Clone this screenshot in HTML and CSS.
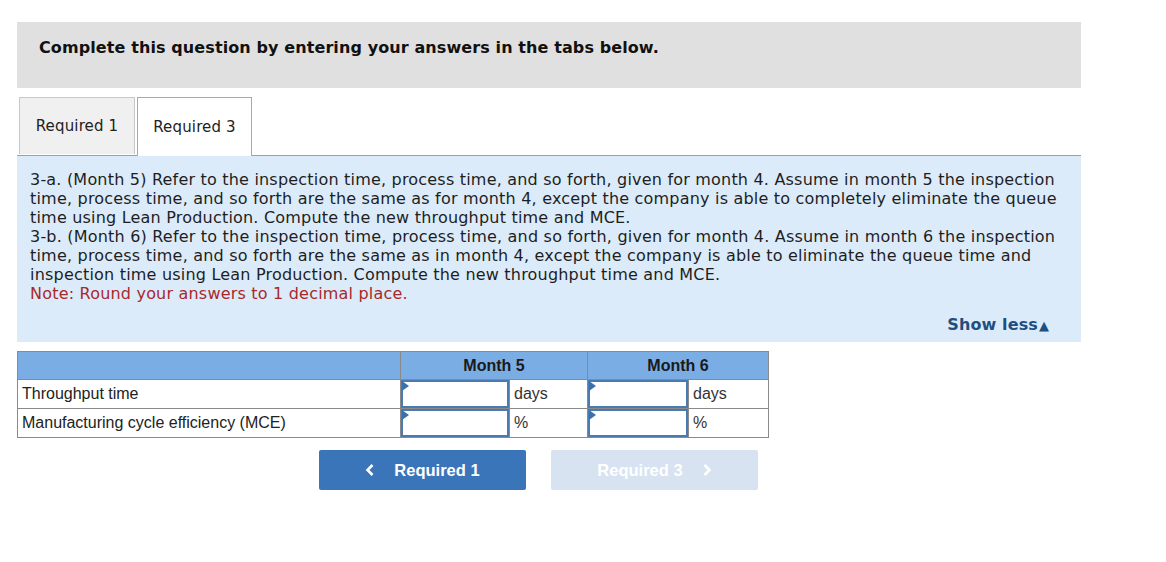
FILE: index.html
```html
<!DOCTYPE html>
<html lang="en">
<head>
    <meta charset="UTF-8">
    <title>Required 3</title>
    <link rel="stylesheet" href="styles.css">
</head>
<body>
    <div class="page">
        <div class="intro">
            <p>Complete this question by entering your answers in the tabs below.</p>
        </div>

        <ul class="tabs">
            <li class="tab">Required 1</li>
            <li class="tab active">Required 3</li>
        </ul>

        <section class="question">
            <p>3-a. (Month 5) Refer to the inspection time, process time, and so forth, given for month 4. Assume in month 5 the inspection time, process time, and so forth are the same as for month 4, except the company is able to completely eliminate the queue time using Lean Production. Compute the new throughput time and MCE.<br>
            3-b. (Month 6) Refer to the inspection time, process time, and so forth, given for month 4. Assume in month 6 the inspection time, process time, and so forth are the same as in month 4, except the company is able to eliminate the queue time and inspection time using Lean Production. Compute the new throughput time and MCE.<br>
            <span class="note">Note: Round your answers to 1 decimal place.</span></p>
            <div class="show-less">Show less<span class="arrow">&#9650;</span></div>
        </section>

        <table class="answers">
            <thead>
                <tr>
                    <th class="label-col"></th>
                    <th colspan="2">Month 5</th>
                    <th colspan="2">Month 6</th>
                </tr>
            </thead>
            <tbody>
                <tr>
                    <td class="label">Throughput time</td>
                    <td class="entry m5"><input type="text"></td>
                    <td class="unit u5">days</td>
                    <td class="entry m6"><input type="text"></td>
                    <td class="unit u6">days</td>
                </tr>
                <tr>
                    <td class="label">Manufacturing cycle efficiency (MCE)</td>
                    <td class="entry m5"><input type="text"></td>
                    <td class="unit u5">%</td>
                    <td class="entry m6"><input type="text"></td>
                    <td class="unit u6">%</td>
                </tr>
            </tbody>
        </table>

        <div class="nav-buttons">
            <button class="nav prev">
                <svg class="chev" width="10" height="14" viewBox="0 0 10 14"><polyline points="7.5,2 2.5,7 7.5,12" fill="none" stroke="currentColor" stroke-width="2.6"/></svg>
                Required 1
            </button>
            <button class="nav next" disabled>
                Required 3
                <svg class="chev" width="10" height="14" viewBox="0 0 10 14"><polyline points="2.5,2 7.5,7 2.5,12" fill="none" stroke="currentColor" stroke-width="2.6"/></svg>
            </button>
        </div>
    </div>
</body>
</html>
```

FILE: styles.css
```css
/* General */
body {
    margin: 0;
    padding: 0;
    background-color: #ffffff;
    color: #1a1a1a;
    font-family: "DejaVu Sans", Verdana, sans-serif;
}

.page {
    width: 1064px;
    padding: 22px 0 0 17px;
}

/* Intro box */
.intro {
    background-color: #e0e0e0;
    height: 66px;
    box-sizing: border-box;
    padding: 16px 0 0 22px;
}

.intro p {
    margin: 0;
    font-size: 16px;
    line-height: 20px;
    letter-spacing: 0.1px;
    font-weight: bold;
    color: #111;
}

/* Tabs */
.tabs {
    list-style: none;
    display: flex;
    gap: 2px;
    margin: 9px 0 0 2px;
    padding: 0;
    height: 58px;
}

.tab {
    width: 116px;
    height: 57px;
    box-sizing: border-box;
    border: 1px solid #c8c8c8;
    border-bottom: none;
    background-color: #f0f0f0;
    display: flex;
    align-items: center;
    justify-content: center;
    font-size: 15px;
    letter-spacing: 0.15px;
    color: #222;
}

.tab.active {
    width: 115px;
    height: 59px;
    background-color: #ffffff;
    border-color: #a8a8a8;
    position: relative;
    z-index: 1;
}

/* Question panel */
.question {
    background-color: #dcebf9;
    border-top: 1px solid #a0a0a0;
    padding: 14px 14px 0 13px;
    height: 172px;
}

.question p {
    margin: 0;
    font-size: 16px;
    line-height: 19px;
    letter-spacing: 0.2px;
    color: #1e1e1e;
}

.note {
    color: #a8282a;
}

.show-less {
    text-align: right;
    margin-top: 12px;
    padding-right: 18px;
    font-size: 16px;
    letter-spacing: 0.1px;
    font-weight: bold;
    color: #1f4f80;
}

.show-less .arrow {
    font-size: 13px;
    margin-left: 1px;
}

/* Answer table */
.answers {
    margin-top: 9px;
    border-collapse: collapse;
    font-family: "Liberation Sans", Arial, sans-serif;
    font-size: 16px;
}

.answers th,
.answers td {
    border: 1px solid #8a8a8a;
    padding: 0;
    height: 28px;
}

.answers th {
    background-color: #7aade3;
    font-weight: bold;
    color: #1a1a1a;
    text-align: center;
    height: 27px;
}

.label-col {
    width: 382px;
}

.label {
    padding-left: 4px !important;
    color: #222;
}

.entry {
    position: relative;
}

.entry.m5 {
    width: 108px;
}

.entry.m6 {
    width: 100px;
}

.entry::before {
    content: "";
    position: absolute;
    left: 1px;
    top: 1px;
    border-top: 5px solid transparent;
    border-bottom: 5px solid transparent;
    border-left: 7px solid #3a70b0;
}

.entry input {
    display: block;
    width: 100%;
    height: 28px;
    box-sizing: border-box;
    border: 2px solid #4a7ab0;
    margin: 0;
    background: #fff;
}

.unit {
    padding-left: 4px !important;
    color: #333;
}

.unit.u5 {
    width: 73px;
}

.unit.u6 {
    width: 75px;
}

/* Navigation buttons */
.nav-buttons {
    display: flex;
    gap: 25px;
    margin: 12px 0 0 302px;
}

.nav {
    width: 207px;
    height: 40px;
    border: none;
    border-radius: 2px;
    font-family: "Liberation Sans", Arial, sans-serif;
    font-size: 16.5px;
    font-weight: bold;
    color: #ffffff;
    display: flex;
    align-items: center;
    justify-content: center;
    padding: 0;
}

.nav.prev {
    background-color: #3a75b9;
}

.nav.next {
    background-color: #d7e3f1;
}

.prev .chev {
    margin-right: 19px;
}

.next .chev {
    margin-left: 19px;
}
```
